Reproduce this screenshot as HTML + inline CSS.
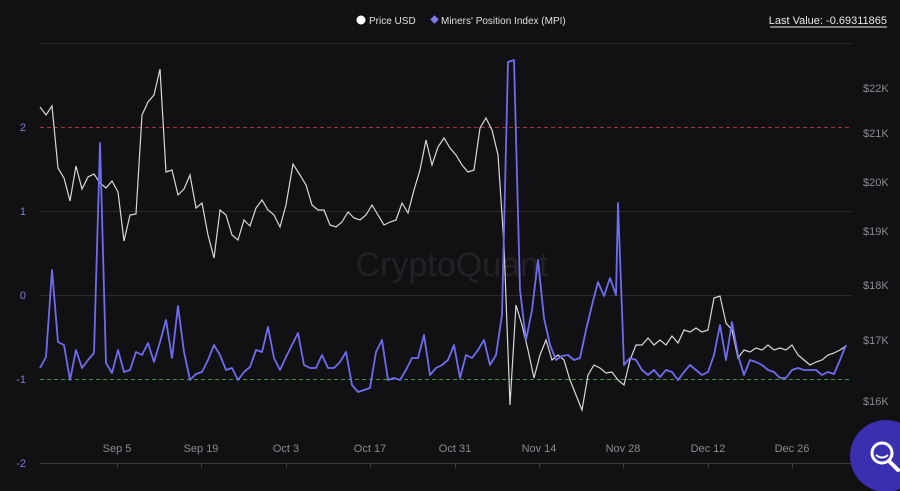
<!DOCTYPE html>
<html><head><meta charset="utf-8"><style>
html,body{margin:0;padding:0;background:#111114;width:900px;height:491px;overflow:hidden;font-family:"Liberation Sans",sans-serif}
</style></head><body>
<svg width="900" height="491" xmlns="http://www.w3.org/2000/svg" style="position:absolute;left:0;top:0">
<rect width="900" height="491" fill="#111114"/>
<g stroke="#2a2a2e" stroke-width="1">
<line x1="40" y1="43.5" x2="852" y2="43.5"/>
<line x1="40" y1="211.5" x2="852" y2="211.5"/>
<line x1="40" y1="295.5" x2="852" y2="295.5"/>
<line x1="40" y1="463.5" x2="852" y2="463.5" stroke="#3a3a40"/>
</g>
<line x1="40" y1="127.5" x2="852" y2="127.5" stroke="#a8323c" stroke-width="1" stroke-dasharray="4,3"/>
<line x1="40" y1="379.5" x2="852" y2="379.5" stroke="#3d9a40" stroke-width="1" stroke-dasharray="4,3"/>
<g stroke="#3a3a40"><line x1="117.5" y1="463" x2="117.5" y2="468"/><line x1="201.5" y1="463" x2="201.5" y2="468"/><line x1="286.5" y1="463" x2="286.5" y2="468"/><line x1="370.5" y1="463" x2="370.5" y2="468"/><line x1="455.5" y1="463" x2="455.5" y2="468"/><line x1="539.5" y1="463" x2="539.5" y2="468"/><line x1="623.5" y1="463" x2="623.5" y2="468"/><line x1="708.5" y1="463" x2="708.5" y2="468"/><line x1="792.5" y1="463" x2="792.5" y2="468"/></g>
<text x="452" y="276" font-size="34" fill="#222226" text-anchor="middle" font-family="Liberation Sans">CryptoQuant</text>
<g font-size="11" fill="#7f7ae0" text-anchor="end"><text x="26" y="131">2</text><text x="26" y="215">1</text><text x="26" y="299">0</text><text x="26" y="383">-1</text><text x="26" y="467">-2</text></g>
<g font-size="11" fill="#8a8a90"><text x="863" y="92">$22K</text><text x="863" y="137">$21K</text><text x="863" y="186">$20K</text><text x="863" y="235">$19K</text><text x="863" y="289">$18K</text><text x="863" y="344">$17K</text><text x="863" y="405">$16K</text></g>
<g font-size="11" fill="#8a8a90" text-anchor="middle"><text x="117" y="452">Sep 5</text><text x="201" y="452">Sep 19</text><text x="286" y="452">Oct 3</text><text x="370" y="452">Oct 17</text><text x="455" y="452">Oct 31</text><text x="539" y="452">Nov 14</text><text x="623" y="452">Nov 28</text><text x="708" y="452">Dec 12</text><text x="792" y="452">Dec 26</text></g>
<polyline fill="none" stroke="#d8d8d8" stroke-width="1.2" points="40,107 46,115 52,106 58,168 64,178 70,201 76,166 82,189 88,177 94,174 100,183 106,188 112,181 118,192 124,241 130,215 136,214 142,115 148,102 154,95 160,69 166,172 172,170 178,195 184,189 190,175 196,208 202,203 208,235 214,258 220,210 226,215 232,235 238,240 244,220 250,226 256,208 262,200 268,210 274,215 280,227 286,205 293,164 300,175 306,185 312,205 318,210 324,210 330,225 336,227 342,222 348,212 354,218 360,220 366,215 372,205 378,215 384,225 390,222 396,220 402,203 408,213 414,190 420,170 426,140 432,165 438,147 444,138 450,148 456,155 462,165 468,172 474,170 480,128 486,118 492,130 498,155 504,245 510,405 516,305 522,325 528,350 534,378 540,355 546,340 552,360 558,355 564,360 570,380 576,395 582,410 588,375 594,365 600,368 606,373 612,372 618,380 624,385 630,360 636,345 642,345 648,338 654,345 660,340 666,345 672,336 678,343 684,330 690,332 696,328 702,332 708,330 714,298 720,296 726,323 732,330 738,358 744,350 750,352 756,348 762,350 768,345 774,350 780,348 786,350 792,345 798,355 804,360 810,365 816,362 822,360 828,355 834,353 840,350 846,346"/>
<polyline fill="none" stroke="#6f6cf0" stroke-width="1.8" stroke-linejoin="round" points="40,368 46,357 52,270 58,342 64,345 70,380 76,350 82,368 88,360 94,353 100,143 106,363 112,373 118,350 124,372 130,370 136,352 142,355 148,343 154,362 160,342 166,320 172,358 178,306 184,352 190,380 196,374 202,372 208,360 214,345 220,355 226,370 232,368 238,380 244,372 250,367 256,350 262,352 268,327 274,358 280,370 286,357 292,345 298,333 304,365 310,368 316,368 322,355 328,368 334,368 340,362 346,352 352,385 358,392 364,390 370,388 376,352 382,340 388,380 394,378 400,380 406,370 412,358 418,358 424,335 430,375 436,368 442,365 448,360 454,345 460,378 466,355 472,358 478,350 484,340 490,365 496,355 502,315 508,62 514,60 520,290 526,340 532,310 538,260 544,318 550,345 556,360 562,356 568,355 574,360 580,358 586,330 592,305 598,282 604,296 610,278 616,295 618,203 624,365 630,358 636,360 642,370 648,375 654,370 660,377 666,370 672,372 678,380 684,372 690,365 696,370 702,375 708,372 714,355 720,325 726,360 732,322 738,355 744,375 750,360 756,362 762,365 768,370 774,372 780,378 786,378 792,370 798,368 804,370 810,370 816,370 822,375 828,372 834,374 840,360 846,345"/>
<circle cx="361" cy="20" r="4.5" fill="#fff"/>
<text x="369" y="24" font-size="10" fill="#e0e0e0">Price USD</text>
<rect x="431.5" y="16.5" width="6" height="6" fill="#7f7af0" transform="rotate(45 434.5 19.5)"/>
<text x="441" y="24" font-size="10" fill="#e0e0e0">Miners' Position Index (MPI)</text>
<text x="887" y="24" font-size="11" fill="#e8e8e8" text-anchor="end">Last Value: -0.69311865</text>
<line x1="770" y1="27" x2="887" y2="27" stroke="#e8e8e8" stroke-width="1"/>
<circle cx="886" cy="456" r="36" fill="#3a2fae"/>
<circle cx="882" cy="453" r="10" fill="none" stroke="#fff" stroke-width="3"/>
<path d="M876 455 q6 5 12 0" fill="none" stroke="#fff" stroke-width="2"/>
<line x1="889" y1="461" x2="898" y2="470" stroke="#fff" stroke-width="4" stroke-linecap="round"/>
</svg>
</body></html>
